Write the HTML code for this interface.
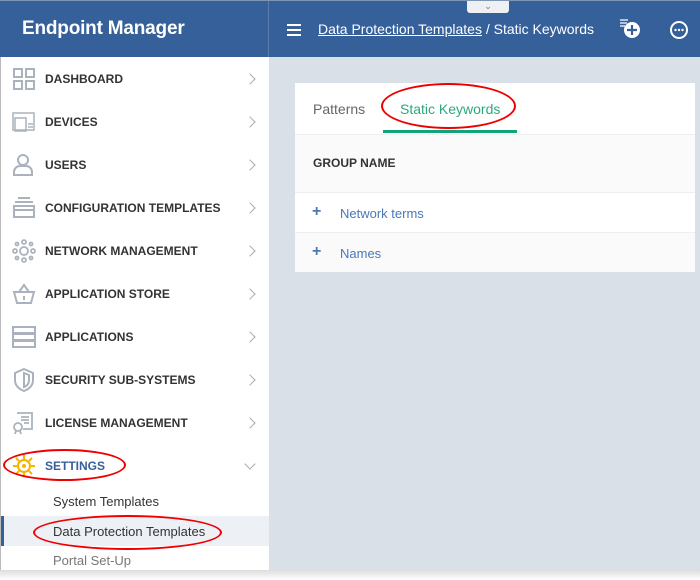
<!DOCTYPE html>
<html><head><style>
*{margin:0;padding:0;box-sizing:border-box}
body{width:700px;height:580px;overflow:hidden;background:#fff;font-family:"Liberation Sans",sans-serif;position:relative}
.hdr{position:absolute;left:0;top:0;width:700px;height:57px;background:#35609a;border-top:1px solid #7f95b5}
.title{position:absolute;left:22px;top:17px;color:#fff;font-size:19px;font-weight:bold;letter-spacing:-0.2px}
.sep{position:absolute;left:268px;top:0;width:1px;height:57px;background:#5a7cab}
.side{position:absolute;left:0;top:57px;width:269px;height:523px;background:#fff;border-left:1px solid #bbb}
.main{position:absolute;left:269px;top:57px;width:431px;height:523px;background:#d9e0e7}
.item{position:absolute;left:0;width:269px;height:43px}
.item .lb{position:absolute;left:44px;top:15px;font-size:12px;font-weight:bold;color:#333}
.item .ar{position:absolute;left:245px;top:18px;width:8px;height:8px;border-right:1.5px solid #aaa;border-top:1.5px solid #aaa;transform:rotate(45deg)}
.item svg{position:absolute;left:11px;top:10px}
.sub{position:absolute;left:52px;font-size:13px;color:#333}
.card{position:absolute;left:295px;top:83px;width:400px;height:189px;background:#fff}
.ell{position:absolute;border:2px solid #e00;border-radius:50%}
</style></head><body>
<div class="hdr">
<div class="title">Endpoint Manager</div>
<div class="sep"></div>
<div style="position:absolute;left:287px;top:23px;width:14px;height:2px;background:#fff;box-shadow:0 5px #fff,0 10px #fff"></div>
<div style="position:absolute;left:318px;top:20px;color:#fff;font-size:14px"><span style="text-decoration:underline">Data Protection Templates</span> / Static Keywords</div>
<div style="position:absolute;left:467px;top:0;width:42px;height:12px;background:#eef0f3;border-radius:0 0 3px 3px;color:#777;font-size:9px;text-align:center;line-height:10px">&#8964;</div>
<svg style="position:absolute;left:618px;top:17px" width="26" height="22"><path d="M2 2h8M2 5h7M2 8h5" stroke="#fff" stroke-width="1.3"/><circle cx="14" cy="12" r="8" fill="#fff"/><path d="M14 7v10M9 12h10" stroke="#35609a" stroke-width="2.2"/></svg>
<svg style="position:absolute;left:669px;top:19px" width="20" height="20"><circle cx="10" cy="10" r="8" fill="none" stroke="#fff" stroke-width="2"/><circle cx="6.5" cy="10" r="1.2" fill="#fff"/><circle cx="10" cy="10" r="1.2" fill="#fff"/><circle cx="13.5" cy="10" r="1.2" fill="#fff"/></svg>
</div>
<div class="side">
<div class="item" style="top:0"><svg width="24" height="24"><g fill="none" stroke="#aab3bd" stroke-width="2"><rect x="2" y="2" width="8" height="8"/><rect x="14" y="2" width="8" height="8"/><rect x="2" y="14" width="8" height="8"/><rect x="14" y="14" width="8" height="8"/></g></svg><span class="lb">DASHBOARD</span><span class="ar"></span></div>
<div class="item" style="top:43px"><svg width="24" height="24"><g fill="none" stroke="#aab3bd" stroke-width="1.5"><rect x="1" y="3" width="21" height="17"/><rect x="3" y="8" width="11" height="13"/><path d="M16 14h5M16 17h5"/></g></svg><span class="lb">DEVICES</span><span class="ar"></span></div>
<div class="item" style="top:86px"><svg width="24" height="24"><g fill="none" stroke="#aab3bd" stroke-width="2"><circle cx="11" cy="7" r="5"/><path d="M2 22v-3a6 6 0 0 1 6-6h6a6 6 0 0 1 6 6v3z"/></g></svg><span class="lb">USERS</span><span class="ar"></span></div>
<div class="item" style="top:129px"><svg width="24" height="24"><g fill="none" stroke="#aab3bd" stroke-width="2"><path d="M6 2h12M3 6h18"/><rect x="2" y="10" width="20" height="11"/><path d="M2 14h20"/></g></svg><span class="lb">CONFIGURATION TEMPLATES</span><span class="ar"></span></div>
<div class="item" style="top:172px"><svg width="24" height="24"><g fill="none" stroke="#aab3bd" stroke-width="1.8"><circle cx="12" cy="12" r="4"/><circle cx="12" cy="3" r="2"/><circle cx="12" cy="21" r="2"/><circle cx="3" cy="12" r="2"/><circle cx="21" cy="12" r="2"/><circle cx="5" cy="5" r="1.5"/><circle cx="19" cy="19" r="1.5"/><circle cx="19" cy="5" r="1.5"/><circle cx="5" cy="19" r="1.5"/></g></svg><span class="lb">NETWORK MANAGEMENT</span><span class="ar"></span></div>
<div class="item" style="top:215px"><svg width="24" height="24"><g fill="none" stroke="#aab3bd" stroke-width="2"><path d="M2 10h20l-3 11H5z"/><path d="M7 10l5-7 5 7M12 14v4"/></g></svg><span class="lb">APPLICATION STORE</span><span class="ar"></span></div>
<div class="item" style="top:258px"><svg width="24" height="24"><g fill="none" stroke="#aab3bd" stroke-width="2"><rect x="1" y="2" width="22" height="6"/><rect x="1" y="9" width="22" height="6"/><rect x="1" y="16" width="22" height="6"/></g></svg><span class="lb">APPLICATIONS</span><span class="ar"></span></div>
<div class="item" style="top:301px"><svg width="24" height="24"><g fill="none" stroke="#aab3bd" stroke-width="2"><path d="M12 1l9 4v7c0 6-4 9-9 11-5-2-9-5-9-11V5z"/><path d="M12 5l5 2v5c0 4-2 6-5 7z"/></g></svg><span class="lb">SECURITY SUB-SYSTEMS</span><span class="ar"></span></div>
<div class="item" style="top:344px"><svg width="24" height="24"><g fill="none" stroke="#aab3bd" stroke-width="1.8"><path d="M5 2h15v16H11"/><path d="M9 6h8M9 9h8M12 12h5"/><circle cx="6" cy="16" r="4"/><path d="M4 20l-1 3M8 20l1 3"/></g></svg><span class="lb">LICENSE MANAGEMENT</span><span class="ar"></span></div>
<div class="item" style="top:387px"><svg width="24" height="24"><g fill="none" stroke="#f4b400" stroke-width="2"><circle cx="12" cy="12" r="6"/><path d="M12 1v4M12 19v4M1 12h4M19 12h4M4 4l3 3M17 17l3 3M20 4l-3 3M7 17l-3 3"/></g><circle cx="12" cy="12" r="2" fill="#f4b400"/></svg><span class="lb" style="color:#35609a">SETTINGS</span><span class="ar" style="transform:rotate(135deg);top:16px"></span></div>
<div class="sub" style="top:437px">System Templates</div>
<div style="position:absolute;left:0;top:459px;width:269px;height:30px;background:#edf1f6;border-left:3px solid #35609a"></div>
<div class="sub" style="top:467px">Data Protection Templates</div>
<div class="sub" style="top:496px;color:#777">Portal Set-Up</div>
</div>
<div class="main"></div>
<div class="card">
<div style="position:absolute;left:18px;top:18px;font-size:14px;color:#666">Patterns</div>
<div style="position:absolute;left:105px;top:18px;font-size:14px;color:#2ba97b">Static Keywords</div>
<div style="position:absolute;left:88px;top:47px;width:134px;height:3px;background:#11a37a"></div>
<div style="position:absolute;left:0;top:51px;width:400px;height:59px;background:#fafafa;border-top:1px solid #eee;border-bottom:1px solid #eee"></div>
<div style="position:absolute;left:18px;top:73px;font-size:12px;font-weight:bold;color:#333">GROUP NAME</div>
<div style="position:absolute;left:0;top:149px;width:400px;height:40px;background:#fafafa;border-top:1px solid #eee"></div>
<div style="position:absolute;left:17px;top:120px;font-size:16px;font-weight:bold;color:#4a78b8">+</div>
<div style="position:absolute;left:45px;top:123px;font-size:13px;color:#4a78b8">Network terms</div>
<div style="position:absolute;left:17px;top:160px;font-size:16px;font-weight:bold;color:#4a78b8">+</div>
<div style="position:absolute;left:45px;top:163px;font-size:13px;color:#4a78b8">Names</div>
</div>
<div class="ell" style="left:381px;top:83px;width:135px;height:46px"></div>
<div class="ell" style="left:3px;top:449px;width:123px;height:32px"></div>
<div class="ell" style="left:33px;top:515px;width:189px;height:35px"></div>
<div style="position:absolute;left:0;top:570px;width:700px;height:10px;background:linear-gradient(#ddd,#fff)"></div>
</body></html>
